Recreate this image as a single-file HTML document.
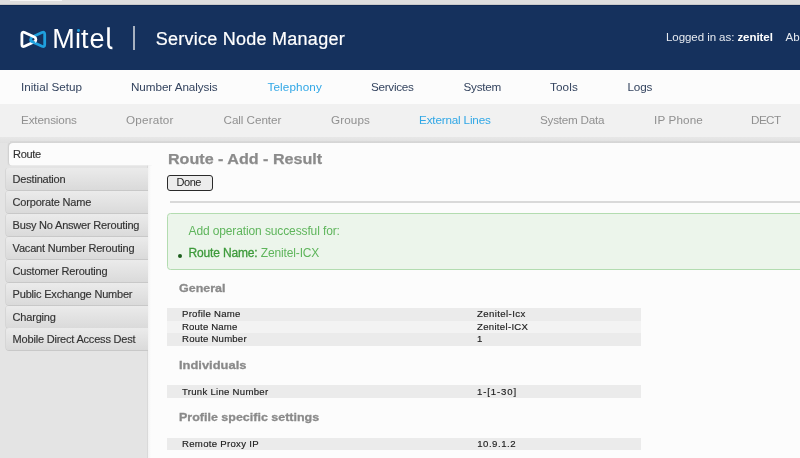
<!DOCTYPE html>
<html><head><meta charset="utf-8">
<style>
*{margin:0;padding:0;box-sizing:border-box}
html,body{will-change:transform;width:800px;height:458px;overflow:hidden;background:#e4e4e4;font-family:"Liberation Sans",sans-serif;position:relative}
.t{position:absolute;white-space:nowrap;line-height:1}
.topbar{position:absolute;left:0;top:0;width:800px;height:5px;background:#dedede;border-bottom:1px solid #c9c9c9}
.topbar .pill{position:absolute;left:10px;top:0;width:52px;height:1px;background:#f6f6f6}
.hdr{position:absolute;left:0;top:5px;width:800px;height:65px;background:#15315d;border-top:1px solid #0e2852}
.sep{position:absolute;left:133px;top:25.7px;width:2px;height:24.5px;background:#a7b1c0}
.nav{position:absolute;left:0;top:70px;width:800px;height:34px;background:#fcfcfc}
.nav .t{top:10.9px;font-size:11.7px;color:#34445f}
.subnav{position:absolute;left:0;top:104px;width:800px;height:33px;background:#f1f1f1}
.subnav .t{top:10.2px;font-size:11.7px;color:#909090}
.blue{color:#30a7e6!important}
.band{position:absolute;left:0;top:136.5px;width:800px;height:6.5px;background:linear-gradient(#e7e7e7,#e0e0e0)}
.main{position:absolute;left:147px;top:143px;width:653px;height:315px;background:linear-gradient(to right,#f3f3f3 0,#fcfcfc 3px);border-left:1px solid #d9d9d9}
.mline{position:absolute;left:10px;top:140.5px;width:790px;height:2.5px;background:linear-gradient(#dcdcdc,#d2d2d2 60%,#dcdcdc)}
.tab{position:absolute;left:6px;width:142px;height:22px;background:linear-gradient(#ebebeb,#dadada);border-radius:3px 0 0 3px;box-shadow:0 1px 0 #c8c8c8, -1px 0 0 #d6d6d6}
.tab .t{left:6.6px;top:6px;font-size:11px;color:#333;letter-spacing:-0.2px;-webkit-text-stroke:0.15px #333}
.sel{position:absolute;left:9px;top:143px;width:143px;height:22.5px;background:#fcfcfc;border-radius:4px 0 0 4px;box-shadow:-0.7px -0.3px 1.5px rgba(0,0,0,0.1);clip-path:inset(0 0 0 -5px)}
.sel .t{left:4px;top:5.8px;font-size:11px;color:#333;letter-spacing:-0.3px;-webkit-text-stroke:0.15px #333}
.title{left:167.5px;top:151.8px;font-size:14.5px;font-weight:bold;color:#8b8b8b;-webkit-text-stroke:0.25px #8b8b8b;transform:scaleX(1.11);transform-origin:0 0}
.done{position:absolute;left:167px;top:175px;width:46px;height:15.8px;border:1.9px solid #2a2a2a;border-radius:3px;background:#ececec}
.hr{position:absolute;left:169.5px;top:201.2px;width:631px;height:2px;background:#d9d9d9}
.green{position:absolute;left:166.8px;top:212.8px;width:640px;height:57.2px;background:#ecf5eb;border:1.5px solid #b3dcb0;border-radius:3.5px}
.bullet{position:absolute;left:178px;top:253.7px;width:4.4px;height:4.4px;background:#1d5e1d;border-radius:50%}
.row{position:absolute;left:167px;width:474px;height:12.6px}
.r1{background:#ebebeb}.r2{background:#f3f3f3}
.cell{position:absolute;font-size:9.6px;color:#1c1c1c;-webkit-text-stroke:0.15px #1c1c1c;line-height:1;white-space:nowrap}
.sec{font-size:11.5px;font-weight:bold;color:#8a8a8a;-webkit-text-stroke:0.3px #8a8a8a}
</style></head><body>
<div class="topbar"><div class="pill"></div></div>
<div class="hdr"></div>
<svg style="position:absolute;left:0;top:0" width="60" height="60" viewBox="0 0 60 60">
<path d="M41.97 32.55 L32.21 37.04 A2.6 2.6 0 0 0 32.21 41.76 L41.97 46.25 Q44.70 47.50 44.70 44.50 L44.70 34.30 Q44.70 31.30 41.97 32.55 Z" fill="none" stroke="#1fa0de" stroke-width="2.8"/>
<path d="M24.63 32.55 L34.39 37.04 A2.6 2.6 0 0 1 34.39 41.76 L24.63 46.25 Q21.90 47.50 21.90 44.50 L21.90 34.30 Q21.90 31.30 24.63 32.55 Z" fill="none" stroke="#ffffff" stroke-width="2.8"/>
<path d="M30.70 39.40 A2.6 2.6 0 0 0 32.21 41.76 L34.94 43.02" fill="none" stroke="#1fa0de" stroke-width="2.8"/>
</svg>
<div class="t" style="left:52.3px;top:26.2px;font-size:27px;color:#fff">M</div>
<div class="t" style="left:74.3px;top:26.2px;font-size:27px;color:#fff">&#305;</div>
<div class="t" style="left:81px;top:26.2px;font-size:27px;color:#fff">t</div>
<div class="t" style="left:89.6px;top:26.2px;font-size:27px;color:#fff">e</div>
<svg style="position:absolute;left:0;top:0" width="120" height="60"><path d="M108.5 27.3 L108.5 44.2 Q108.5 48.2 112.4 48" fill="none" stroke="#fff" stroke-width="2.6"/></svg>
<div style="position:absolute;left:76.8px;top:28.8px;width:2.8px;height:2.8px;border-radius:50%;background:#1fa0de"></div>
<div class="sep"></div>
<div class="t" style="left:155.8px;top:30.3px;font-size:18px;color:#fff;letter-spacing:0.25px;-webkit-text-stroke:0.2px #fff">Service Node Manager</div>
<div class="t" style="left:666px;top:32.2px;font-size:11.5px;color:#e6eaf0;letter-spacing:-0.06px">Logged in as: <b style="color:#fff">zenitel</b></div>
<div class="t" style="left:785.5px;top:32.2px;font-size:11.5px;color:#e6eaf0">Ab</div>

<div class="nav">
<span class="t" style="left:21px">Initial Setup</span>
<span class="t" style="left:131px;letter-spacing:-0.07px">Number Analysis</span>
<span class="t blue" style="left:267.5px;letter-spacing:0.13px">Telephony</span>
<span class="t" style="left:371px;letter-spacing:-0.28px">Services</span>
<span class="t" style="left:463.5px;letter-spacing:-0.25px">System</span>
<span class="t" style="left:550px;letter-spacing:0.14px">Tools</span>
<span class="t" style="left:627.5px;letter-spacing:-0.17px">Logs</span>
</div>
<div class="subnav">
<span class="t" style="left:21px;letter-spacing:-0.15px">Extensions</span>
<span class="t" style="left:126px;letter-spacing:0.18px">Operator</span>
<span class="t" style="left:223.5px;letter-spacing:-0.06px">Call Center</span>
<span class="t" style="left:331px;letter-spacing:0.1px">Groups</span>
<span class="t blue" style="left:419px;letter-spacing:-0.17px">External Lines</span>
<span class="t" style="left:540px;letter-spacing:-0.24px">System Data</span>
<span class="t" style="left:654px;letter-spacing:0.13px">IP Phone</span>
<span class="t" style="left:751px;letter-spacing:-0.56px">DECT</span>
</div>
<div class="band"></div>
<div class="mline"></div>
<div class="main"></div>

<div class="tab" style="top:168.1px"><span class="t">Destination</span></div>
<div class="tab" style="top:191.0px"><span class="t">Corporate Name</span></div>
<div class="tab" style="top:213.9px"><span class="t">Busy No Answer Rerouting</span></div>
<div class="tab" style="top:236.8px"><span class="t">Vacant Number Rerouting</span></div>
<div class="tab" style="top:259.7px"><span class="t">Customer Rerouting</span></div>
<div class="tab" style="top:282.6px"><span class="t">Public Exchange Number</span></div>
<div class="tab" style="top:305.5px"><span class="t">Charging</span></div>
<div class="tab" style="top:328.4px"><span class="t">Mobile Direct Access Dest</span></div>
<div class="sel"><span class="t">Route</span></div>

<div class="t title">Route - Add - Result</div>
<div class="done"></div>
<div class="t" style="left:176.5px;top:176.8px;font-size:11px;color:#222;letter-spacing:-0.45px">Done</div>
<div class="hr"></div>
<div class="green"></div>
<div class="t" style="left:188.5px;top:225.3px;font-size:12px;color:#5fb55c;letter-spacing:-0.12px">Add operation successful for:</div>
<div class="bullet"></div>
<div class="t" style="left:188.5px;top:246.9px;font-size:12px;color:#5fb55c;letter-spacing:-0.14px"><span style="color:#3d9a3b;-webkit-text-stroke:0.3px #3d9a3b;letter-spacing:-0.15px">Route Name:</span> Zenitel-ICX</div>

<div class="t sec" style="left:179px;top:282.5px;transform:scaleX(1.085);transform-origin:0 0">General</div>
<div class="row r1" style="top:308px"></div>
<div class="row r2" style="top:320.6px"></div>
<div class="row r1" style="top:333.2px"></div>
<div class="cell" style="left:182px;top:309.3px;letter-spacing:0.26px">Profile Name</div>
<div class="cell" style="left:182px;top:321.8px;letter-spacing:0.16px">Route Name</div>
<div class="cell" style="left:182px;top:334.3px;letter-spacing:0.2px">Route Number</div>
<div class="cell" style="left:477px;top:309.3px;letter-spacing:0.4px">Zenitel-Icx</div>
<div class="cell" style="left:477px;top:321.8px;letter-spacing:0.3px">Zenitel-ICX</div>
<div class="cell" style="left:477px;top:334.3px;letter-spacing:0px">1</div>

<div class="t sec" style="left:179px;top:360.3px;transform:scaleX(1.122);transform-origin:0 0">Individuals</div>
<div class="row r1" style="top:385.4px"></div>
<div class="cell" style="left:182px;top:386.6px;letter-spacing:0.27px">Trunk Line Number</div>
<div class="cell" style="left:477px;top:386.6px;letter-spacing:0.86px">1-[1-30]</div>

<div class="t sec" style="left:179px;top:412.3px;transform:scaleX(1.086);transform-origin:0 0">Profile specific settings</div>
<div class="row r1" style="top:437.7px"></div>
<div class="cell" style="left:182px;top:438.8px;letter-spacing:0.29px">Remote Proxy IP</div>
<div class="cell" style="left:477.2px;top:438.8px;letter-spacing:0.52px">10.9.1.2</div>
</body></html>
